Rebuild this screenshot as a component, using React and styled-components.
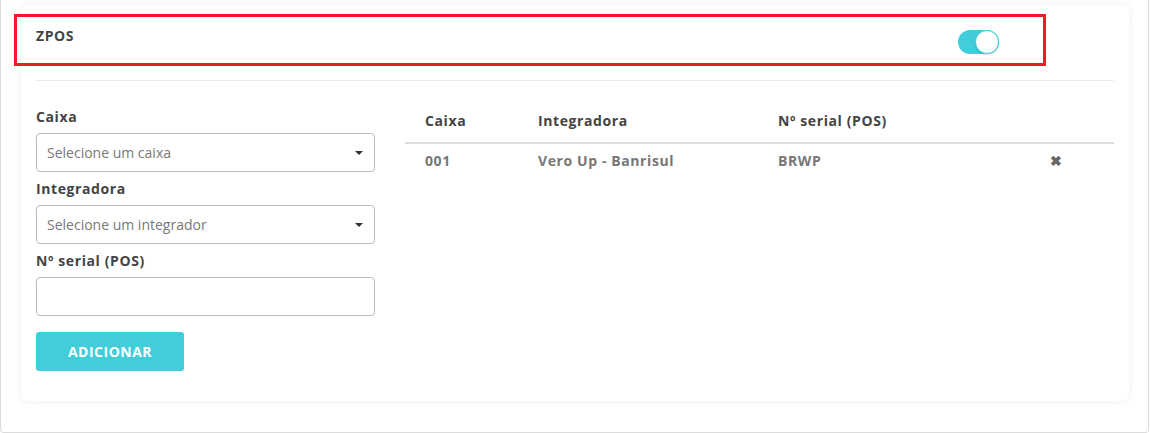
import React from "react";
import styled, { createGlobalStyle } from "styled-components";

const Global = createGlobalStyle`
  html, body { margin: 0; padding: 0; background: #fff; }
  body { font-family: "Open Sans", "Liberation Sans", sans-serif; }
  * { box-sizing: border-box; }
`;

const Frame = styled.div`
  width: 1149px;
  height: 433px;
  border: 1px solid #dcdcdc;
  border-top: none;
  border-radius: 0 0 4px 4px;
  padding: 5px 19px 0 20px;
  background: #fff;
`;

const Card = styled.div`
  position: relative;
  width: 1108px;
  height: 396px;
  background: #fff;
  border-radius: 6px;
  box-shadow: 0 0 10px rgba(0, 0, 0, 0.07);
  padding: 15px 15px 0 15px;
`;

const Highlight = styled.div`
  position: absolute;
  left: -7px;
  top: 9px;
  width: 1032px;
  height: 52px;
  border: 3px solid #ed1c24;
  pointer-events: none;
`;

const Header = styled.div`
  display: flex;
  justify-content: space-between;
  align-items: flex-start;
  height: 61px;
  padding-top: 6px;
  border-bottom: 1px solid #ececec;
`;

const Title = styled.div`
  font-size: 14px;
  font-weight: 700;
  line-height: 20px;
  letter-spacing: 0.6px;
  color: #444;
`;

const Toggle = styled.div`
  position: relative;
  width: 41px;
  height: 24px;
  margin: 4px 115px 0 0;
  border-radius: 12px;
  background: ${(p) => (p.$on ? "#41ceda" : "#ccc")};
`;

const Knob = styled.div`
  position: absolute;
  top: 0;
  right: ${(p) => (p.$on ? "0" : "17px")};
  width: 24px;
  height: 24px;
  border-radius: 50%;
  background: #fff;
  border: 1.5px solid #41ceda;
  box-shadow: 0 1px 2px rgba(0, 0, 0, 0.15);
`;

const Body = styled.div`
  display: flex;
  align-items: flex-start;
  gap: 30px;
  padding-top: 26px;
`;

const FormCol = styled.div`
  width: 339px;
  flex: none;
  display: flex;
  flex-direction: column;
  gap: 7px;
`;

const Field = styled.div`
  display: flex;
  flex-direction: column;
`;

const Label = styled.label`
  font-size: 14px;
  font-weight: 700;
  line-height: 20px;
  letter-spacing: 0.6px;
  color: #444;
  margin-bottom: 6px;
`;

const SelectBox = styled.div`
  position: relative;
  height: 39px;
  border: 1px solid #bdbdbd;
  border-radius: 4px;
  padding: 0 30px 0 10px;
  display: flex;
  align-items: center;
  font-size: 14px;
  color: #777;
  &::after {
    content: "";
    position: absolute;
    right: 11px;
    top: 17px;
    border-left: 4px solid transparent;
    border-right: 4px solid transparent;
    border-top: 4px solid #333;
  }
`;

const Input = styled.input`
  height: 39px;
  border: 1px solid #bdbdbd;
  border-radius: 4px;
  padding: 0 10px;
  font-size: 14px;
  font-family: inherit;
  outline: none;
`;

const Button = styled.button`
  margin-top: 9px;
  width: 148px;
  height: 39px;
  border: none;
  border-radius: 3px;
  background: #41ceda;
  color: #fff;
  font-family: inherit;
  font-size: 14px;
  font-weight: 700;
  letter-spacing: 0.5px;
  cursor: pointer;
`;

const Table = styled.table`
  flex: 1;
  border-collapse: collapse;
  table-layout: fixed;
`;

const Th = styled.th`
  text-align: left;
  font-size: 14px;
  font-weight: 700;
  line-height: 20px;
  letter-spacing: 0.6px;
  color: #444;
  padding: 4px 0 11px 20px;
  border-bottom: 2px solid #dedede;
  width: ${(p) => p.$w || "auto"};
`;

const Td = styled.td`
  font-size: 14px;
  font-weight: 700;
  line-height: 20px;
  letter-spacing: 0.6px;
  color: #777;
  padding: 7px 0 8px 20px;
`;

const Remove = styled.span`
  color: #666;
  font-size: 14px;
  cursor: pointer;
`;

export default function App() {
  return (
    <>
      <Global />
      <Frame>
        <Card>
          <Highlight />
          <Header>
            <Title>ZPOS</Title>
            <Toggle $on>
              <Knob $on />
            </Toggle>
          </Header>
          <Body>
            <FormCol>
              <Field>
                <Label>Caixa</Label>
                <SelectBox>Selecione um caixa</SelectBox>
              </Field>
              <Field>
                <Label>Integradora</Label>
                <SelectBox>Selecione um integrador</SelectBox>
              </Field>
              <Field>
                <Label>Nº serial (POS)</Label>
                <Input />
              </Field>
              <div>
                <Button>ADICIONAR</Button>
              </div>
            </FormCol>
            <Table>
              <thead>
                <tr>
                  <Th $w="113px">Caixa</Th>
                  <Th $w="240px">Integradora</Th>
                  <Th $w="272px">Nº serial (POS)</Th>
                  <Th />
                </tr>
              </thead>
              <tbody>
                <tr>
                  <Td>001</Td>
                  <Td>Vero Up - Banrisul</Td>
                  <Td>BRWP</Td>
                  <Td>
                    <Remove>✖</Remove>
                  </Td>
                </tr>
              </tbody>
            </Table>
          </Body>
        </Card>
      </Frame>
    </>
  );
}
